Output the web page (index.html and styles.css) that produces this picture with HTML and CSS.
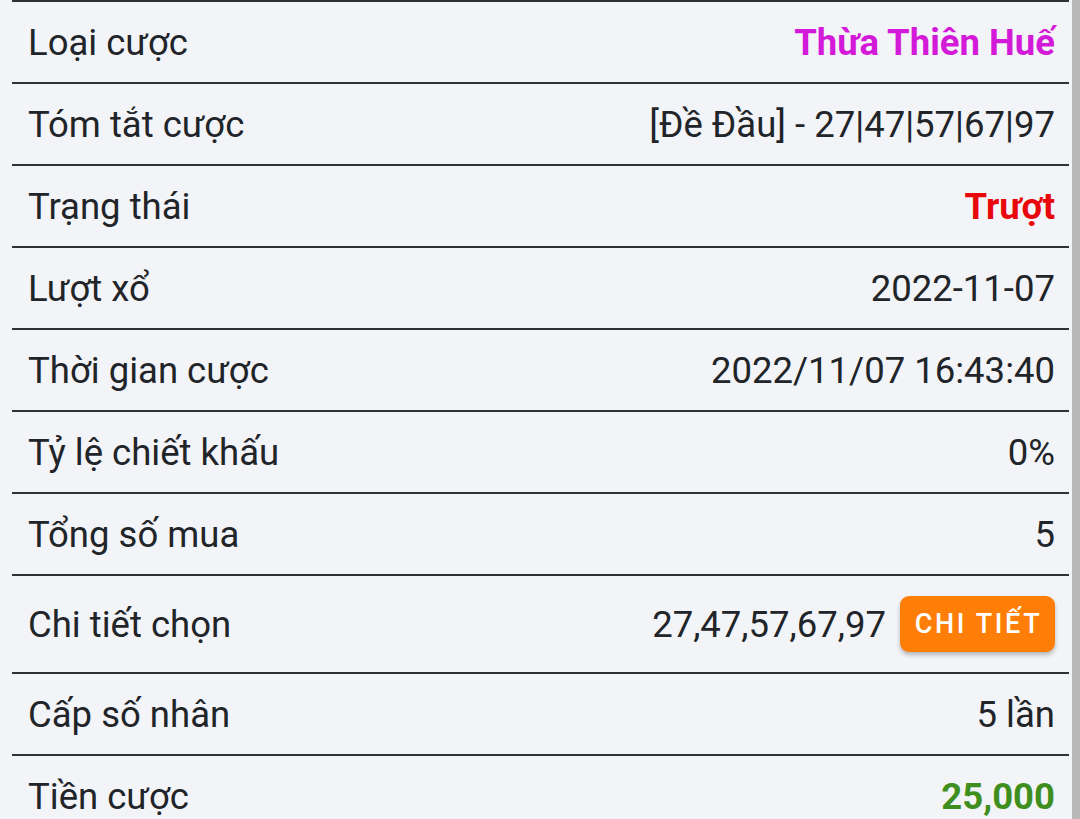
FILE: index.html
```html
<!DOCTYPE html>
<html lang="vi">
<head>
<meta charset="utf-8">
<link rel="stylesheet" href="styles.css">
</head>
<body>
<div class="page">
  <div class="list">
    <div class="row"><span class="label">Loại cược</span><span class="value magenta">Thừa Thiên Huế</span></div>
    <div class="row"><span class="label">Tóm tắt cược</span><span class="value">[Đề Đầu] - 27|47|57|67|97</span></div>
    <div class="row"><span class="label">Trạng thái</span><span class="value red">Trượt</span></div>
    <div class="row"><span class="label">Lượt xổ</span><span class="value">2022-11-07</span></div>
    <div class="row"><span class="label">Thời gian cược</span><span class="value">2022/11/07 16:43:40</span></div>
    <div class="row"><span class="label">Tỷ lệ chiết khấu</span><span class="value">0%</span></div>
    <div class="row"><span class="label">Tổng số mua</span><span class="value">5</span></div>
    <div class="row tall"><span class="label">Chi tiết chọn</span><span class="value-group"><span class="value">27,47,57,67,97</span><button class="btn">CHI TIẾT</button></span></div>
    <div class="row"><span class="label">Cấp số nhân</span><span class="value">5 lần</span></div>
    <div class="row"><span class="label">Tiền cược</span><span class="value green">25,000</span></div>
  </div>
  <div class="scroll-strip"></div>
</div>
</body>
</html>
```

FILE: styles.css
```css
html, body {
  margin: 0;
  padding: 0;
  background: #f3f4f8;
  overflow: hidden;
}
body {
  font-family: Roboto, "Noto Sans", sans-serif;
  color: #212428;
  width: 1080px;
  height: 819px;
}
.page {
  display: flex;
  height: 819px;
}
.list {
  width: 1057px;
  margin-left: 12px;
  border-top: 2px solid #2e3236;
}
.row {
  display: flex;
  align-items: center;
  justify-content: space-between;
  height: 80px;
  border-bottom: 2px solid #2e3236;
  padding: 0 14px 0 16px;
  font-size: 36.5px;
}
.row.tall {
  height: 96px;
}
.value-group {
  display: flex;
  align-items: center;
  gap: 14px;
}
.magenta {
  color: #d41ad9;
  font-weight: 700;
}
.red {
  color: #e8080c;
  font-weight: 700;
}
.green {
  color: #3f8f1f;
  font-weight: 700;
}
.btn {
  font-family: Roboto, sans-serif;
  font-weight: 500;
  font-size: 27px;
  letter-spacing: 2.6px;
  color: #fff;
  background: #ff7e07;
  border: none;
  border-radius: 9px;
  width: 155px;
  height: 56px;
  padding: 0 0 0 2px;
  box-shadow: 0 3px 4px rgba(0, 0, 0, 0.25);
}
.scroll-strip {
  width: 8px;
  margin-left: 3px;
  background: #b8b8b8;
}
```
